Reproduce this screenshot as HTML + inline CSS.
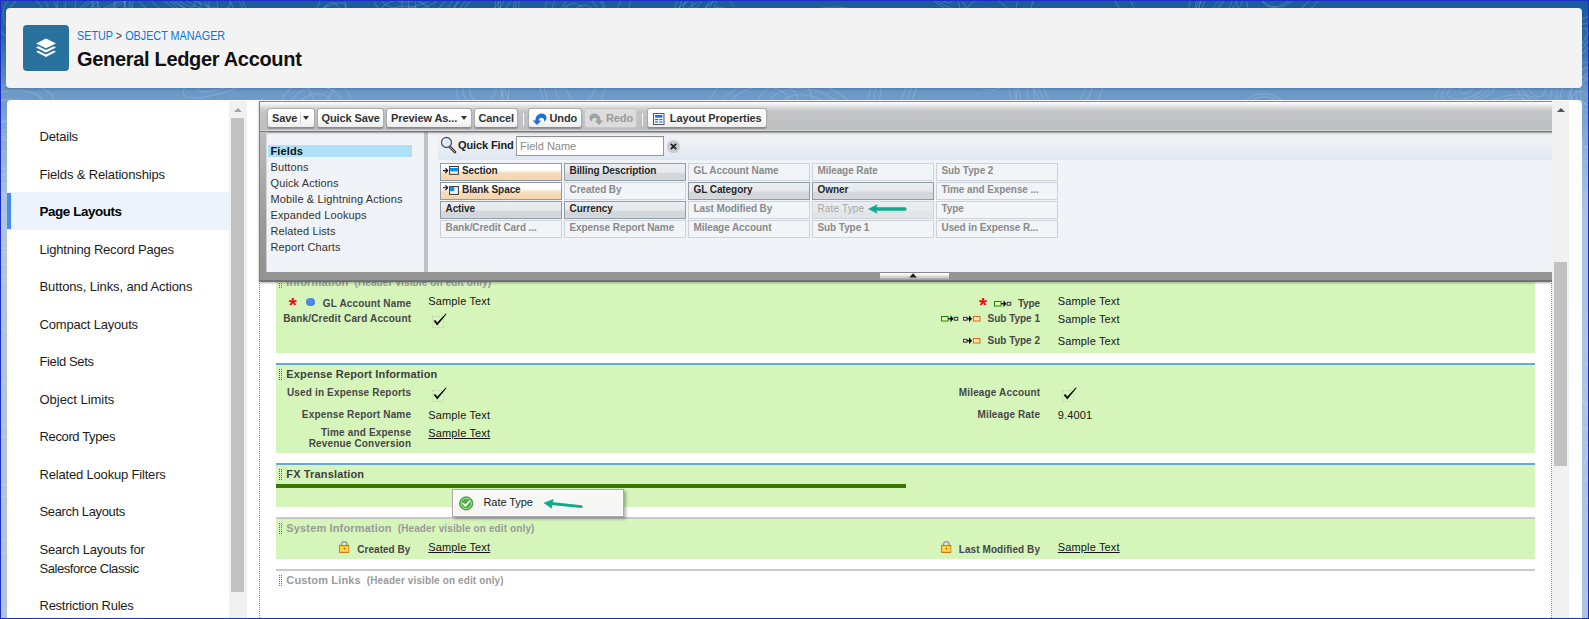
<!DOCTYPE html>
<html lang="en">
<head>
<meta charset="utf-8">
<title>General Ledger Account - Page Layouts</title>
<style>
*{box-sizing:border-box;margin:0;padding:0}
html,body{width:1589px;height:619px;overflow:hidden}
body{position:relative;font-family:"Liberation Sans",Arial,sans-serif;color:#222;
 background:linear-gradient(to bottom,#1b5c9e 0px,#1b5c9e 8px,#2a68a8 36px,#4a80b9 66px,#6a98c8 92px,#7fa5d2 124px,#95b3da 160px,#a9c0e0 196px,#aec3e1 218px,#aec3e1 619px);}
.abs{position:absolute}
.frame{position:absolute;left:0;top:0;width:1589px;height:619px;border:1.4px solid #1a2fc0;border-top-width:1px;z-index:50;pointer-events:none}
/* header card */
.hcard{position:absolute;left:6px;top:8px;width:1576px;height:79.5px;background:#f3f3f3;border-radius:4px;box-shadow:0 2px 2px rgba(0,0,0,.12)}
.hicon{position:absolute;left:17px;top:17px;width:46px;height:46px;background:#2a729e;border-radius:4px}
.crumb{position:absolute;left:71px;top:19.8px;font-size:12px;line-height:16px;color:#0b74d6;white-space:nowrap;transform-origin:left center;transform:scaleX(.9)}
.crumb i{font-style:normal;color:#444}
.title{position:absolute;left:71px;top:38px;font-size:20px;line-height:26px;font-weight:bold;color:#111;white-space:nowrap;letter-spacing:-.32px}
/* main card */
.mcard{position:absolute;left:7px;top:100px;width:1575px;height:530px;background:#fff;border-radius:4px}
/* nav */
.nav{position:absolute;left:7px;top:117px;width:222px}
.nav div{height:37.5px;padding:10px 0 0 32.5px;font-size:13px;line-height:19.5px;color:#1c1c1c;letter-spacing:-.17px;white-space:nowrap}
.nav div.tall{height:56.5px;line-height:19px}
.nav div.on{position:relative;background:#ecf3fd;font-weight:bold;color:#000;font-size:13.4px}
.nav div.on::before{content:"";position:absolute;left:0;top:1px;width:4px;height:35.8px;background:#3f8df3}
.sbtrack{position:absolute;background:#f1f1f1}
.sbthumb{position:absolute;background:#c1c1c1}
.arrowup{position:absolute;width:0;height:0;border-left:4px solid transparent;border-right:4px solid transparent;border-bottom:4.5px solid #a3a3a3}
</style>
</head>
<body>
<!--BGPAT--><svg class="abs" style="left:0;top:0;z-index:0" width="1589" height="619" viewBox="0 0 1589 619" fill="none" stroke="#fff" stroke-width="1" stroke-opacity=".17"><ellipse cx="508" cy="-4" rx="52" ry="12" transform="rotate(96 508 -4)"/><ellipse cx="508" cy="-4" rx="38" ry="9" transform="rotate(96 508 -4)"/><ellipse cx="508" cy="-4" rx="29" ry="7" transform="rotate(96 508 -4)"/><ellipse cx="120" cy="34" rx="31" ry="25" transform="rotate(11 120 34)"/><ellipse cx="120" cy="34" rx="23" ry="19" transform="rotate(11 120 34)"/><ellipse cx="930" cy="-16" rx="48" ry="11" transform="rotate(40 930 -16)"/><ellipse cx="930" cy="-16" rx="38" ry="9" transform="rotate(40 930 -16)"/><ellipse cx="930" cy="-16" rx="28" ry="7" transform="rotate(40 930 -16)"/><ellipse cx="483" cy="89" rx="27" ry="26" transform="rotate(115 483 89)"/><ellipse cx="483" cy="89" rx="20" ry="20" transform="rotate(115 483 89)"/><ellipse cx="483" cy="89" rx="14" ry="13" transform="rotate(115 483 89)"/><ellipse cx="989" cy="44" rx="46" ry="32" transform="rotate(84 989 44)"/><ellipse cx="989" cy="44" rx="36" ry="25" transform="rotate(84 989 44)"/><ellipse cx="989" cy="44" rx="26" ry="18" transform="rotate(84 989 44)"/><ellipse cx="989" cy="44" rx="10" ry="7" transform="rotate(84 989 44)"/><ellipse cx="113" cy="17" rx="44" ry="20" transform="rotate(81 113 17)"/><ellipse cx="113" cy="17" rx="34" ry="15" transform="rotate(81 113 17)"/><ellipse cx="1214" cy="-4" rx="43" ry="11" transform="rotate(120 1214 -4)"/><ellipse cx="1214" cy="-4" rx="34" ry="9" transform="rotate(120 1214 -4)"/><ellipse cx="1214" cy="-4" rx="23" ry="6" transform="rotate(120 1214 -4)"/><ellipse cx="1279" cy="-15" rx="23" ry="18" transform="rotate(125 1279 -15)"/><ellipse cx="1279" cy="-15" rx="17" ry="13" transform="rotate(125 1279 -15)"/><ellipse cx="1035" cy="114" rx="61" ry="18" transform="rotate(69 1035 114)"/><ellipse cx="1035" cy="114" rx="46" ry="14" transform="rotate(69 1035 114)"/><ellipse cx="1035" cy="114" rx="35" ry="10" transform="rotate(69 1035 114)"/><ellipse cx="171" cy="-17" rx="58" ry="14" transform="rotate(45 171 -17)"/><ellipse cx="171" cy="-17" rx="44" ry="10" transform="rotate(45 171 -17)"/><ellipse cx="171" cy="-17" rx="33" ry="8" transform="rotate(45 171 -17)"/><ellipse cx="171" cy="-17" rx="18" ry="4" transform="rotate(45 171 -17)"/><ellipse cx="433" cy="-6" rx="40" ry="25" transform="rotate(127 433 -6)"/><ellipse cx="433" cy="-6" rx="31" ry="20" transform="rotate(127 433 -6)"/><ellipse cx="433" cy="-6" rx="23" ry="14" transform="rotate(127 433 -6)"/><ellipse cx="115" cy="-4" rx="52" ry="10" transform="rotate(150 115 -4)"/><ellipse cx="115" cy="-4" rx="42" ry="8" transform="rotate(150 115 -4)"/><ellipse cx="115" cy="-4" rx="28" ry="6" transform="rotate(150 115 -4)"/><ellipse cx="582" cy="54" rx="68" ry="29" transform="rotate(93 582 54)"/><ellipse cx="582" cy="54" rx="49" ry="21" transform="rotate(93 582 54)"/><ellipse cx="1532" cy="70" rx="47" ry="21" transform="rotate(71 1532 70)"/><ellipse cx="1532" cy="70" rx="37" ry="17" transform="rotate(71 1532 70)"/><ellipse cx="1532" cy="70" rx="28" ry="12" transform="rotate(71 1532 70)"/><ellipse cx="1532" cy="70" rx="16" ry="7" transform="rotate(71 1532 70)"/><ellipse cx="245" cy="23" rx="21" ry="10" transform="rotate(27 245 23)"/><ellipse cx="245" cy="23" rx="16" ry="8" transform="rotate(27 245 23)"/><ellipse cx="95" cy="4" rx="38" ry="28" transform="rotate(172 95 4)"/><ellipse cx="95" cy="4" rx="30" ry="22" transform="rotate(172 95 4)"/><ellipse cx="95" cy="4" rx="20" ry="14" transform="rotate(172 95 4)"/><ellipse cx="1574" cy="42" rx="34" ry="14" transform="rotate(135 1574 42)"/><ellipse cx="1574" cy="42" rx="25" ry="10" transform="rotate(135 1574 42)"/><ellipse cx="1574" cy="42" rx="18" ry="7" transform="rotate(135 1574 42)"/><ellipse cx="315" cy="108" rx="37" ry="29" transform="rotate(165 315 108)"/><ellipse cx="315" cy="108" rx="27" ry="21" transform="rotate(165 315 108)"/><ellipse cx="315" cy="108" rx="18" ry="14" transform="rotate(165 315 108)"/><ellipse cx="406" cy="26" rx="27" ry="32" transform="rotate(96 406 26)"/><ellipse cx="406" cy="26" rx="20" ry="24" transform="rotate(96 406 26)"/><ellipse cx="406" cy="26" rx="13" ry="15" transform="rotate(96 406 26)"/><ellipse cx="1216" cy="2" rx="30" ry="21" transform="rotate(145 1216 2)"/><ellipse cx="1216" cy="2" rx="23" ry="16" transform="rotate(145 1216 2)"/><ellipse cx="1216" cy="2" rx="18" ry="13" transform="rotate(145 1216 2)"/><ellipse cx="26" cy="14" rx="31" ry="29" transform="rotate(172 26 14)"/><ellipse cx="26" cy="14" rx="23" ry="22" transform="rotate(172 26 14)"/><ellipse cx="26" cy="14" rx="17" ry="16" transform="rotate(172 26 14)"/><ellipse cx="26" cy="14" rx="5" ry="5" transform="rotate(172 26 14)"/><ellipse cx="111" cy="-11" rx="42" ry="19" transform="rotate(87 111 -11)"/><ellipse cx="111" cy="-11" rx="32" ry="15" transform="rotate(87 111 -11)"/><ellipse cx="1283" cy="-13" rx="52" ry="35" transform="rotate(141 1283 -13)"/><ellipse cx="1283" cy="-13" rx="41" ry="28" transform="rotate(141 1283 -13)"/><ellipse cx="1283" cy="-13" rx="25" ry="17" transform="rotate(141 1283 -13)"/><ellipse cx="522" cy="87" rx="69" ry="21" transform="rotate(72 522 87)"/><ellipse cx="522" cy="87" rx="54" ry="17" transform="rotate(72 522 87)"/><ellipse cx="187" cy="-4" rx="65" ry="33" transform="rotate(26 187 -4)"/><ellipse cx="187" cy="-4" rx="50" ry="25" transform="rotate(26 187 -4)"/><ellipse cx="187" cy="-4" rx="33" ry="17" transform="rotate(26 187 -4)"/><ellipse cx="187" cy="-4" rx="24" ry="12" transform="rotate(26 187 -4)"/><ellipse cx="3" cy="111" rx="52" ry="25" transform="rotate(168 3 111)"/><ellipse cx="3" cy="111" rx="41" ry="19" transform="rotate(168 3 111)"/><ellipse cx="3" cy="111" rx="24" ry="11" transform="rotate(168 3 111)"/><ellipse cx="3" cy="111" rx="20" ry="10" transform="rotate(168 3 111)"/><ellipse cx="327" cy="45" rx="58" ry="19" transform="rotate(98 327 45)"/><ellipse cx="327" cy="45" rx="43" ry="14" transform="rotate(98 327 45)"/><ellipse cx="327" cy="45" rx="26" ry="9" transform="rotate(98 327 45)"/><ellipse cx="1060" cy="89" rx="45" ry="33" transform="rotate(158 1060 89)"/><ellipse cx="1060" cy="89" rx="34" ry="25" transform="rotate(158 1060 89)"/><ellipse cx="1060" cy="89" rx="27" ry="20" transform="rotate(158 1060 89)"/><ellipse cx="697" cy="1" rx="18" ry="32" transform="rotate(31 697 1)"/><ellipse cx="697" cy="1" rx="14" ry="26" transform="rotate(31 697 1)"/><ellipse cx="697" cy="1" rx="11" ry="19" transform="rotate(31 697 1)"/><ellipse cx="697" cy="1" rx="4" ry="8" transform="rotate(31 697 1)"/><ellipse cx="845" cy="43" rx="58" ry="35" transform="rotate(10 845 43)"/><ellipse cx="845" cy="43" rx="43" ry="26" transform="rotate(10 845 43)"/><ellipse cx="845" cy="43" rx="30" ry="18" transform="rotate(10 845 43)"/><ellipse cx="896" cy="81" rx="65" ry="22" transform="rotate(110 896 81)"/><ellipse cx="896" cy="81" rx="50" ry="17" transform="rotate(110 896 81)"/><ellipse cx="896" cy="81" rx="34" ry="12" transform="rotate(110 896 81)"/><ellipse cx="759" cy="107" rx="54" ry="35" transform="rotate(170 759 107)"/><ellipse cx="759" cy="107" rx="40" ry="25" transform="rotate(170 759 107)"/><ellipse cx="759" cy="107" rx="31" ry="20" transform="rotate(170 759 107)"/><ellipse cx="709" cy="33" rx="38" ry="19" transform="rotate(121 709 33)"/><ellipse cx="709" cy="33" rx="29" ry="14" transform="rotate(121 709 33)"/><ellipse cx="709" cy="33" rx="18" ry="9" transform="rotate(121 709 33)"/><ellipse cx="709" cy="33" rx="7" ry="3" transform="rotate(121 709 33)"/><ellipse cx="232" cy="75" rx="52" ry="14" transform="rotate(159 232 75)"/><ellipse cx="232" cy="75" rx="38" ry="10" transform="rotate(159 232 75)"/><ellipse cx="232" cy="75" rx="28" ry="8" transform="rotate(159 232 75)"/><ellipse cx="232" cy="75" rx="15" ry="4" transform="rotate(159 232 75)"/><ellipse cx="1593" cy="92" rx="26" ry="22" transform="rotate(93 1593 92)"/><ellipse cx="1593" cy="92" rx="20" ry="17" transform="rotate(93 1593 92)"/><ellipse cx="1593" cy="92" rx="15" ry="13" transform="rotate(93 1593 92)"/><ellipse cx="577" cy="22" rx="42" ry="30" transform="rotate(69 577 22)"/><ellipse cx="577" cy="22" rx="33" ry="24" transform="rotate(69 577 22)"/><ellipse cx="577" cy="22" rx="19" ry="13" transform="rotate(69 577 22)"/><ellipse cx="1265" cy="111" rx="23" ry="17" transform="rotate(7 1265 111)"/><ellipse cx="1265" cy="111" rx="19" ry="14" transform="rotate(7 1265 111)"/><ellipse cx="1265" cy="111" rx="12" ry="9" transform="rotate(7 1265 111)"/><ellipse cx="1466" cy="90" rx="31" ry="14" transform="rotate(165 1466 90)"/><ellipse cx="1466" cy="90" rx="25" ry="11" transform="rotate(165 1466 90)"/><ellipse cx="1466" cy="90" rx="19" ry="8" transform="rotate(165 1466 90)"/><ellipse cx="1466" cy="90" rx="7" ry="3" transform="rotate(165 1466 90)"/><ellipse cx="673" cy="-15" rx="67" ry="28" transform="rotate(144 673 -15)"/><ellipse cx="673" cy="-15" rx="52" ry="22" transform="rotate(144 673 -15)"/><ellipse cx="411" cy="-8" rx="19" ry="38" transform="rotate(75 411 -8)"/><ellipse cx="411" cy="-8" rx="15" ry="30" transform="rotate(75 411 -8)"/><ellipse cx="411" cy="-8" rx="9" ry="18" transform="rotate(75 411 -8)"/><ellipse cx="1509" cy="111" rx="32" ry="15" transform="rotate(168 1509 111)"/><ellipse cx="1509" cy="111" rx="25" ry="12" transform="rotate(168 1509 111)"/><ellipse cx="1509" cy="111" rx="17" ry="8" transform="rotate(168 1509 111)"/><ellipse cx="1076" cy="13" rx="60" ry="38" transform="rotate(7 1076 13)"/><ellipse cx="1076" cy="13" rx="45" ry="29" transform="rotate(7 1076 13)"/><ellipse cx="289" cy="41" rx="67" ry="13" transform="rotate(147 289 41)"/><ellipse cx="289" cy="41" rx="50" ry="10" transform="rotate(147 289 41)"/><ellipse cx="289" cy="41" rx="30" ry="6" transform="rotate(147 289 41)"/><ellipse cx="289" cy="41" rx="11" ry="2" transform="rotate(147 289 41)"/><ellipse cx="482" cy="5" rx="30" ry="16" transform="rotate(159 482 5)"/><ellipse cx="482" cy="5" rx="23" ry="12" transform="rotate(159 482 5)"/><ellipse cx="482" cy="5" rx="18" ry="9" transform="rotate(159 482 5)"/><ellipse cx="192" cy="-15" rx="57" ry="17" transform="rotate(29 192 -15)"/><ellipse cx="192" cy="-15" rx="43" ry="13" transform="rotate(29 192 -15)"/><ellipse cx="805" cy="111" rx="49" ry="29" transform="rotate(8 805 111)"/><ellipse cx="805" cy="111" rx="38" ry="22" transform="rotate(8 805 111)"/><ellipse cx="805" cy="111" rx="27" ry="16" transform="rotate(8 805 111)"/><ellipse cx="0" cy="581" rx="30" ry="42"/><ellipse cx="9" cy="581" rx="21" ry="29"/><ellipse cx="2" cy="262" rx="18" ry="20"/><ellipse cx="3" cy="262" rx="13" ry="14"/><ellipse cx="-2" cy="356" rx="16" ry="40"/><ellipse cx="1" cy="356" rx="11" ry="28"/><ellipse cx="-2" cy="154" rx="19" ry="22"/><ellipse cx="1" cy="154" rx="13" ry="15"/><ellipse cx="7" cy="224" rx="23" ry="41"/><ellipse cx="5" cy="224" rx="16" ry="29"/><ellipse cx="1" cy="461" rx="28" ry="36"/><ellipse cx="9" cy="461" rx="19" ry="25"/><ellipse cx="-2" cy="183" rx="25" ry="46"/><ellipse cx="8" cy="183" rx="18" ry="32"/><ellipse cx="1589" cy="547" rx="23" ry="49"/><ellipse cx="1581" cy="547" rx="16" ry="35"/><ellipse cx="1589" cy="367" rx="21" ry="53"/><ellipse cx="1589" cy="367" rx="15" ry="37"/><ellipse cx="1587" cy="396" rx="28" ry="47"/><ellipse cx="1582" cy="396" rx="20" ry="33"/><ellipse cx="1580" cy="125" rx="14" ry="34"/><ellipse cx="1589" cy="125" rx="10" ry="24"/><ellipse cx="1587" cy="384" rx="23" ry="45"/><ellipse cx="1585" cy="384" rx="16" ry="32"/><ellipse cx="1585" cy="112" rx="26" ry="50"/><ellipse cx="1585" cy="112" rx="18" ry="35"/><ellipse cx="1582" cy="433" rx="13" ry="49"/><ellipse cx="1580" cy="433" rx="9" ry="35"/></svg><!--/BGPAT-->
<div class="hcard">
  <div class="hicon">
    <svg width="46" height="46" viewBox="0 0 46 46">
      <polygon points="23,13.6 33,18.4 23,23.3 13,18.4" fill="#fff"/>
      <polygon points="13,22.4 15.3,21.3 23,25 30.7,21.3 33,22.4 23,27.4" fill="#fff"/>
      <polygon points="13,26.8 15.3,25.7 23,29.4 30.7,25.7 33,26.8 23,32" fill="#fff"/>
    </svg>
  </div>
  <div class="crumb">SETUP <i>&gt;</i> OBJECT MANAGER</div>
  <div class="title">General Ledger Account</div>
</div>

<div class="mcard"></div>

<div class="nav">
  <div style="letter-spacing:-0.19px">Details</div>
  <div style="letter-spacing:-0.146px">Fields &amp; Relationships</div>
  <div class="on" style="letter-spacing:-0.41px">Page Layouts</div>
  <div style="letter-spacing:-0.198px">Lightning Record Pages</div>
  <div style="letter-spacing:-0.122px">Buttons, Links, and Actions</div>
  <div style="letter-spacing:-0.184px">Compact Layouts</div>
  <div style="letter-spacing:-0.38px">Field Sets</div>
  <div style="letter-spacing:-0.033px">Object Limits</div>
  <div style="letter-spacing:-0.364px">Record Types</div>
  <div style="letter-spacing:-0.18px">Related Lookup Filters</div>
  <div style="letter-spacing:-0.359px">Search Layouts</div>
  <div class="tall"><span style="letter-spacing:-.228px">Search Layouts for</span><br><span style="letter-spacing:-.44px">Salesforce Classic</span></div>
  <div style="letter-spacing:-0.25px">Restriction Rules</div>
</div>
<div class="sbtrack" style="left:229px;top:101px;width:17.5px;height:520px"></div>
<div class="sbthumb" style="left:231px;top:118px;width:13px;height:474px"></div>
<div class="arrowup" style="left:233.5px;top:108px"></div>

<style>
.ed{position:absolute;left:259px;top:101px;width:1293px;height:181px;background:linear-gradient(#c0c1c3 0,#bcbdbf 30px,#9a9a9a 120px,#939393 170px,#959595 177.5px,#737375 178.5px,#6c6c6e 180px);border-top:1px solid #8a8585;border-left:1px solid #857d7d;z-index:10;box-shadow:0 1px 2.5px rgba(0,0,0,.3)}
.tb{position:absolute;left:0;top:0;width:1292px;height:30px;background:linear-gradient(to bottom,#fff 0,#f2f2f2 2px,#d4d5d6 6px,#c3c4c6 10px,#bfc0c2 24px,#bebfc1 27.6px,#d6d6d6 28.2px,#d6d6d6 28.8px,#77787a 29.2px,#77787a 30px)}
.btn{position:absolute;top:5.9px;height:20.1px;margin-left:-.6px;border:1px solid #adadad;border-bottom-color:#8c8c8c;border-radius:3px;background:linear-gradient(#fff,#fff 40%,#ededed);font-size:11px;font-weight:bold;line-height:18.4px;color:#333;white-space:nowrap;padding-left:3px;letter-spacing:-.1px;box-shadow:0 1px 1px rgba(0,0,0,.25)}
.btn.dis{background:#dcdcdc;color:#9a9a9a;border-color:#c6c6c6;box-shadow:none}
.tsep{position:absolute;top:11px;width:1px;height:13px;background:#f4f4f4}
.dn{position:absolute;width:0;height:0;border-left:3.5px solid transparent;border-right:3.5px solid transparent;border-top:4.5px solid #333}
.pin{position:absolute;left:6.5px;top:29.5px;width:1286.5px;height:140.5px;background:#f0f4f8;box-shadow:-.6px 0 0 #eef2f6}
.pin::after{content:"";position:absolute;left:0;top:0;right:0;height:3px;z-index:4;background:linear-gradient(rgba(0,0,0,.30) 0,rgba(0,0,0,.30) .5px,rgba(0,0,0,.08) 1.5px,rgba(0,0,0,0) 3px)}
.pdiv{position:absolute;left:157.6px;top:0;width:3.8px;height:140.5px;background:#c2c2c6}
.cat{position:absolute;left:4px;font-size:11px;line-height:12px;color:#333;white-space:nowrap;letter-spacing:.12px}
.cat.on{left:1.5px;width:144px;height:12px;background:#aee0f8;font-weight:bold;color:#111;padding-left:2.5px}
.qf{position:absolute;left:171px;top:0;width:1115.5px;height:28px;background:linear-gradient(#eef0f4,#eef0f4 45%,#dde7f2)}
.qfl{position:absolute;left:20.5px;top:7px;font-size:11px;font-weight:bold;color:#222;line-height:13px;white-space:nowrap;letter-spacing:-.12px}
.qfi{position:absolute;left:78px;top:4.5px;width:148px;height:19.5px;border:1px solid #989898;border-top-color:#8c8c8c;background:linear-gradient(#f3f3f3,#fff 4px);font-size:11px;line-height:18.2px;color:#8b8b8b;padding-left:3.5px}
.qfx{position:absolute;left:229.8px;top:8.7px;width:12.6px;height:12.6px;border-radius:6.3px;background:#c9cccf}
.cell{position:absolute;width:122px;height:18px;border:1px solid #909ca6;font-size:10px;font-weight:bold;line-height:12px;padding:1.3px 0 0 4.5px;letter-spacing:-.08px;color:#262626;white-space:nowrap;background:linear-gradient(#eceff2,#e6e9ec 50%,#d2d6da 62%,#d4d8dc)}
.cell.used{color:#8a8a8a;border-color:#cdd3d9;background:#f1f5f8}
.cell.sp{background:linear-gradient(#fff,#fff 35%,#f6dcb9 58%,#f3d3aa);border-color:#8f9ba5;padding-left:21px}
.cell.dragsrc{color:#a6a6a6;font-weight:normal;letter-spacing:.15px;border-color:#cfd4d9;background:linear-gradient(#ebeef1,#e8ebee 50%,#e2e5e8 62%,#e3e6e9)}
.handle{position:absolute;left:619.5px;top:170px;width:69.3px;height:7.9px;background:linear-gradient(#8a8a8a 0,#8a8a8a .7px,#fbfbfb 1.5px,#ececec 40%,#c8c8c8 70%,#a2a2a2 92%,#929292 100%)}
</style>
<div class="ed">
  <div class="tb">
    <div class="btn" style="left:8px;width:47.1px;padding-left:3.6px">Save<span class="abs" style="left:31.1px;top:2.7px;width:1px;height:12px;background:#d5d5d5"></span><span class="dn" style="left:34.8px;top:6.7px"></span></div>
    <div class="btn" style="left:58px;width:66.1px;padding-left:3.1px">Quick Save</div>
    <div class="btn" style="left:127px;width:85.1px;padding-left:3.6px">Preview As...<span class="dn" style="left:73.1px;top:6.7px"></span></div>
    <div class="btn" style="left:215px;width:43.6px;padding-left:3.1px">Cancel</div>
    <div class="tsep" style="left:262.6px"></div>
    <div class="btn" style="left:269px;width:53.1px;padding-left:20.1px">Undo
      <svg class="abs" style="left:2.6px;top:4.2px" width="17" height="12.5" viewBox="0 0 16 12"><path d="M0.5 7.2 L4.6 11.6 L8.6 7.4 L6.2 7.3 C6.3 4.6 9.2 3.6 10.9 5.4 C11.6 6.2 11.7 7.3 11.4 8.4 C14.2 6.9 14.6 3.4 12.2 1.5 C9.2 -0.8 3.4 0.6 3.1 7.2 Z" fill="#1b6fd8"/></svg>
    </div>
    <div class="btn dis" style="left:325px;width:52.1px;padding-left:20.6px">Redo
      <svg class="abs" style="left:1.4px;top:4.2px" width="17" height="12.5" viewBox="0 0 16 12"><path d="M15.5 7.2 L11.4 11.6 L7.4 7.4 L9.8 7.3 C9.7 4.6 6.8 3.6 5.1 5.4 C4.4 6.2 4.3 7.3 4.6 8.4 C1.8 6.9 1.4 3.4 3.8 1.5 C6.8 -0.8 12.6 0.6 12.9 7.2 Z" fill="#a2a2a2"/></svg>
    </div>
    <div class="tsep" style="left:381.6px"></div>
    <div class="btn" style="left:388px;width:119.1px;padding-left:21.4px">Layout Properties
      <svg class="abs" style="left:4.2px;top:4.5px" width="12" height="12" viewBox="0 0 12 12"><rect x=".5" y=".5" width="10.5" height="11" fill="#fff" stroke="#555" stroke-width="1"/><rect x="2" y="2" width="7.5" height="2.6" fill="#1d6be0"/><rect x="2" y="6" width="3.2" height="1.2" fill="#1d6be0"/><rect x="6.3" y="6" width="3.2" height="1.2" fill="#1d6be0"/><rect x="2" y="8.4" width="3.2" height="1.2" fill="#1d6be0"/><rect x="6.3" y="8.4" width="3.2" height="1.2" fill="#1d6be0"/></svg>
    </div>
  </div>
  <div class="pin">
    <div class="cat on" style="top:13.5px">Fields</div>
    <div class="cat" style="top:29.5px">Buttons</div>
    <div class="cat" style="top:45.5px">Quick Actions</div>
    <div class="cat" style="top:61.5px">Mobile &amp; Lightning Actions</div>
    <div class="cat" style="top:77.5px">Expanded Lookups</div>
    <div class="cat" style="top:93.5px">Related Lists</div>
    <div class="cat" style="top:109.5px">Report Charts</div>
    <div class="pdiv"></div>
    <div class="qf">
      <svg class="abs" style="left:2px;top:4px" width="17" height="18" viewBox="0 0 17 18"><line x1="9.5" y1="10.5" x2="15" y2="16" stroke="#3a3a3a" stroke-width="2.6" stroke-linecap="round"/><line x1="10" y1="11" x2="14.6" y2="15.6" stroke="#c9a36a" stroke-width="1" stroke-linecap="round"/><circle cx="6.5" cy="6.5" r="5" fill="#d9ecfa" stroke="#555" stroke-width="1.3"/><path d="M3.2 6.2 A3.4 3.4 0 0 1 6.4 3" stroke="#fff" stroke-width="1.2" fill="none"/></svg>
      <div class="qfl">Quick Find</div>
      <div class="qfi">Field Name</div>
      <div class="qfx"><svg class="abs" style="left:2.8px;top:2.8px" width="7" height="7" viewBox="0 0 7 7"><path d="M.8 .8 L6.2 6.2 M6.2 .8 L.8 6.2" stroke="#222" stroke-width="1.8"/></svg></div>
    </div>
    <div class="cell sp" style="left:173.5px;top:31.5px">Section<svg class="abs" style="left:1.5px;top:2.3px" width="19" height="11" viewBox="0 0 19 11"><path d="M0 4.6 H4.5 M2.4 2.2 L4.7 4.6 L2.4 7" stroke="#111" stroke-width="1.1" fill="none"/><rect x="6.6" y=".5" width="8.8" height="7.8" fill="#fff" stroke="#333"/><rect x="7.1" y="2" width="7.8" height="3.4" fill="#0a8cf5"/></svg></div>
    <div class="cell " style="left:297.5px;top:31.5px">Billing Description</div>
    <div class="cell used" style="left:421.5px;top:31.5px">GL Account Name</div>
    <div class="cell used" style="left:545.5px;top:31.5px">Mileage Rate</div>
    <div class="cell used" style="left:669.5px;top:31.5px">Sub Type 2</div>
    <div class="cell sp" style="left:173.5px;top:50.5px">Blank Space<svg class="abs" style="left:1.5px;top:.8px" width="19" height="13" viewBox="0 0 19 13"><path d="M0 3.8 H4.5 M2.4 1.4 L4.7 3.8 L2.4 6.2" stroke="#111" stroke-width="1.1" fill="none"/><rect x="6.6" y="2.6" width="8.8" height="7.8" fill="#f4f8fc" stroke="#333"/><rect x="7.1" y="3.1" width="4.2" height="4" fill="#0a8cf5"/></svg></div>
    <div class="cell used" style="left:297.5px;top:50.5px">Created By</div>
    <div class="cell " style="left:421.5px;top:50.5px">GL Category</div>
    <div class="cell " style="left:545.5px;top:50.5px">Owner</div>
    <div class="cell used" style="left:669.5px;top:50.5px">Time and Expense ...</div>
    <div class="cell " style="left:173.5px;top:69.5px">Active</div>
    <div class="cell " style="left:297.5px;top:69.5px">Currency</div>
    <div class="cell used" style="left:421.5px;top:69.5px">Last Modified By</div>
    <div class="cell dragsrc" style="left:545.5px;top:69.5px">Rate Type<svg class="abs" style="left:55px;top:2.4px" width="40" height="10" viewBox="0 0 40 10"><path d="M.6 5 L9.2 .7 L8 3.6 L36.8 3.6 A1.5 1.5 0 0 1 36.8 6.6 L8 6.6 L9.2 9.3 Z" fill="#12a98b" stroke="#12a98b" stroke-width=".6" stroke-linejoin="round"/></svg></div>
    <div class="cell used" style="left:669.5px;top:69.5px">Type</div>
    <div class="cell used" style="left:173.5px;top:88.5px">Bank/Credit Card ...</div>
    <div class="cell used" style="left:297.5px;top:88.5px">Expense Report Name</div>
    <div class="cell used" style="left:421.5px;top:88.5px">Mileage Account</div>
    <div class="cell used" style="left:545.5px;top:88.5px">Sub Type 1</div>
    <div class="cell used" style="left:669.5px;top:88.5px">Used in Expense R...</div>
  </div>
  <div class="handle"><svg class="abs" style="left:29.1px;top:1.2px" width="9" height="5" viewBox="0 0 9 5"><polygon points="0.4,4.6 4.1,0.3 7.8,4.6" fill="#1c1c1c"/></svg></div>
</div>

<!--CANVAS-->
<style>
.cv{position:absolute;left:0;top:0;width:1589px;height:619px;z-index:5;overflow:hidden}
.dot{position:absolute;top:281px;width:1px;height:340px;background:repeating-linear-gradient(to bottom,#8a8a8a 0,#8a8a8a 1px,transparent 1px,transparent 2px)}
.sec{position:absolute;left:276px;width:1259px;background:#d5f5bb}
.ln{position:absolute;left:276px;width:1259px;height:2px}
.lb{position:absolute;font-size:10px;font-weight:bold;line-height:12px;color:#474747;white-space:nowrap;text-align:right;letter-spacing:.16px}
.vl{position:absolute;font-size:11px;line-height:13px;color:#151515;white-space:nowrap;letter-spacing:.14px}
.vl.u{text-decoration:underline;text-underline-offset:1px}
.sh{position:absolute;left:286.3px;font-size:11px;font-weight:bold;line-height:13px;color:#404040;white-space:nowrap;letter-spacing:.15px}
.sh.g{color:#9a9a9a}
.sh small{font-size:10px;letter-spacing:.12px;margin-left:6px}
.grip{position:absolute;left:278.6px;width:4px;height:12px;background:
 repeating-linear-gradient(to bottom,#555 0,#555 1px,transparent 1px,transparent 2px) 0 0/1px 100% no-repeat,
 repeating-linear-gradient(to bottom,#fff 0,#fff 1px,transparent 1px,transparent 2px) 1px 0/1px 100% no-repeat,
 repeating-linear-gradient(to bottom,#555 0,#555 1px,transparent 1px,transparent 2px) 2.5px 0/1px 100% no-repeat,
 repeating-linear-gradient(to bottom,#fff 0,#fff 1px,transparent 1px,transparent 2px) 3.5px 0/1px 100% no-repeat}
.grip.g{opacity:.85}
.req{position:absolute;font-size:21px;font-weight:bold;line-height:20px;color:#f20d0d}
.cb{position:absolute;width:12px;height:12px;border:1px dotted #cbc6d2}
.tip{position:absolute;left:452px;top:489px;width:172px;height:27.5px;border:1px solid #a9a9a9;background:linear-gradient(#f9f9f7,#f4f5f2);box-shadow:inset 0 0 0 1px rgba(255,255,255,.7),2px 2px 3px rgba(0,0,0,.3)}
</style>
<div class="cv">
<div class="dot" style="left:259px"></div><div class="dot" style="left:1551px"></div>
<div class="sec" style="top:273px;height:79.8px"></div>
<div class="ln" style="top:363px;background:#6ca8ca"></div><div class="sec" style="top:365px;height:87.8px"></div>
<div class="ln" style="top:463px;background:#6ca8ca"></div><div class="sec" style="top:465px;height:41.7px"></div>
<div class="ln" style="top:517px;background:#c9c9c9"></div><div class="sec" style="top:519px;height:39.7px"></div>
<div class="ln" style="top:569px;background:#c9c9c9"></div>
<div class="grip g" style="top:276.5px"></div><div class="sh g" style="top:275.69px">Information<small>(Header visible on edit only)</small></div>
<div class="req" style="left:288.8px;top:294.9px">*</div>
<div class="abs" style="left:306.2px;top:297.5px;width:8.4px;height:8.4px;border-radius:50%;background:radial-gradient(circle at 40% 35%,#5b93ea,#3f78d6)"></div>
<div class="lb" style="left:211.145px;width:200px;top:297.54px;letter-spacing:0.145px">GL Account Name</div>
<div class="vl" style="left:428.3px;top:294.69px">Sample Text</div>
<div class="lb" style="left:211.163px;width:200px;top:312.54px;letter-spacing:0.163px">Bank/Credit Card Account</div>
<div class="cb" style="left:432px;top:316px"></div><svg class="abs" style="left:432.8px;top:313.4px" width="15" height="14" viewBox="0 0 15 14"><path d="M0.7 8.1 L2.2 6.9 L4.3 9.6 L12.9 0.5 L13.6 1.1 L4.2 12.6 Z" fill="#000"/></svg>
<div class="req" style="left:979.1px;top:294.9px">*</div>
<svg class="abs" style="left:993.5px;top:299.5px" width="18" height="8" viewBox="0 0 18 8"><rect x=".5" y="1.5" width="6.5" height="4.5" fill="#f3f5a2" stroke="#0b8a10"/><path d="M7 3.75 H10" stroke="#000" stroke-width="1.2"/><path d="M9.5 .3 L12.4 3.75 L9.5 7.2 Z" fill="#000"/><rect x="13.2" y="2.3" width="3.6" height="2.9" fill="#e8e8e8" stroke="#222" stroke-width=".9"/></svg>
<div class="lb" style="left:839.826px;width:200px;top:297.54px;letter-spacing:-0.174px">Type</div>
<div class="vl" style="left:1057.8px;top:294.69px">Sample Text</div>
<svg class="abs" style="left:940.5px;top:314.5px" width="18" height="8" viewBox="0 0 18 8"><rect x=".5" y="1.5" width="6.5" height="4.5" fill="#f3f5a2" stroke="#0b8a10"/><path d="M7 3.75 H10" stroke="#000" stroke-width="1.2"/><path d="M9.5 .3 L12.4 3.75 L9.5 7.2 Z" fill="#000"/><rect x="13.2" y="2.3" width="3.6" height="2.9" fill="#e8e8e8" stroke="#222" stroke-width=".9"/></svg>
<svg class="abs" style="left:962.5px;top:314.5px" width="18" height="8" viewBox="0 0 18 8"><rect x=".6" y="2.3" width="3.4" height="2.9" fill="#e8e8e8" stroke="#222" stroke-width=".9"/><path d="M4 3.75 H7" stroke="#000" stroke-width="1.2"/><path d="M6 .3 L9 3.75 L6 7.2 Z" fill="#000"/><rect x="10.4" y="1.5" width="6.5" height="4.5" fill="#f8f2a0" stroke="#e2601c"/></svg>
<div class="lb" style="left:839.98px;width:200px;top:312.54px;letter-spacing:-0.02px">Sub Type 1</div>
<div class="vl" style="left:1057.8px;top:312.69px">Sample Text</div>
<svg class="abs" style="left:962.5px;top:336.5px" width="18" height="8" viewBox="0 0 18 8"><rect x=".6" y="2.3" width="3.4" height="2.9" fill="#e8e8e8" stroke="#222" stroke-width=".9"/><path d="M4 3.75 H7" stroke="#000" stroke-width="1.2"/><path d="M6 .3 L9 3.75 L6 7.2 Z" fill="#000"/><rect x="10.4" y="1.5" width="6.5" height="4.5" fill="#f8f2a0" stroke="#e2601c"/></svg>
<div class="lb" style="left:839.98px;width:200px;top:334.54px;letter-spacing:-0.02px">Sub Type 2</div>
<div class="vl" style="left:1057.8px;top:334.69px">Sample Text</div>
<div class="grip" style="top:368.5px"></div><div class="sh" style="top:367.69px">Expense Report Information</div>
<div class="lb" style="left:211.157px;width:200px;top:386.54px;letter-spacing:0.157px">Used in Expense Reports</div>
<div class="cb" style="left:432px;top:390px"></div><svg class="abs" style="left:432.8px;top:387.4px" width="15" height="14" viewBox="0 0 15 14"><path d="M0.7 8.1 L2.2 6.9 L4.3 9.6 L12.9 0.5 L13.6 1.1 L4.2 12.6 Z" fill="#000"/></svg>
<div class="lb" style="left:840.148px;width:200px;top:386.54px;letter-spacing:0.148px">Mileage Account</div>
<div class="cb" style="left:1062px;top:390px"></div><svg class="abs" style="left:1062.8px;top:387.4px" width="15" height="14" viewBox="0 0 15 14"><path d="M0.7 8.1 L2.2 6.9 L4.3 9.6 L12.9 0.5 L13.6 1.1 L4.2 12.6 Z" fill="#000"/></svg>
<div class="lb" style="left:211.166px;width:200px;top:408.54px;letter-spacing:0.166px">Expense Report Name</div>
<div class="vl" style="left:428.3px;top:408.69px">Sample Text</div>
<div class="lb" style="left:840.114px;width:200px;top:408.54px;letter-spacing:0.114px">Mileage Rate</div>
<div class="vl" style="left:1057.8px;top:408.69px">9.4001</div>
<div class="lb" style="left:211.161px;width:200px;top:426.54px;letter-spacing:0.161px">Time and Expense</div>
<div class="lb" style="left:211.169px;width:200px;top:437.54px;letter-spacing:0.169px">Revenue Conversion</div>
<div class="vl u" style="left:428.3px;top:426.69px">Sample Text</div>
<div class="grip" style="top:468.5px"></div><div class="sh" style="top:467.69px">FX Translation</div>
<div class="abs" style="left:276px;top:484px;width:630px;height:4px;background:#367800"></div>
<div class="tip">
<svg class="abs" style="left:6px;top:6px" width="15" height="15" viewBox="0 0 15 15"><circle cx="7.2" cy="7.4" r="6.6" fill="#4cae3c" stroke="#2f8c29" stroke-width=".8"/><circle cx="7.2" cy="7.4" r="5.2" fill="none" stroke="#bfe6b5" stroke-width=".9"/><path d="M4.2 7.6 L6.4 9.8 L10.3 5.4" fill="none" stroke="#fff" stroke-width="1.8" stroke-linecap="round" stroke-linejoin="round"/></svg>
<div class="vl" style="left:30.5px;top:5.689999999999998px;color:#222;letter-spacing:-.07px">Rate Type</div>
<svg class="abs" style="left:90px;top:8.5px" width="42" height="11" viewBox="0 0 42 11"><path d="M1.2 4 L10.2 .5 L9.2 4.4 L8.6 9.2 Z" fill="#12a98b" stroke="#12a98b" stroke-width=".7" stroke-linejoin="round"/><line x1="8.5" y1="4.5" x2="38.2" y2="7.6" stroke="#12a98b" stroke-width="2.9" stroke-linecap="round"/></svg>
</div>
<div class="grip g" style="top:522.5px"></div><div class="sh g" style="top:521.69px">System Information<small>(Header visible on edit only)</small></div>
<svg class="abs" style="left:339.4px;top:541px" width="11" height="12" viewBox="0 0 11 12"><path d="M2.3 5 V3.6 A2.9 2.9 0 0 1 8.1 3.6 V5" fill="none" stroke="#a3a1b8" stroke-width="1.8"/><rect x=".6" y="4.4" width="9.2" height="7.1" fill="#fbc81a" stroke="#c8700f" stroke-width=".9"/><rect x="1.2" y="6.2" width="8.4" height="1" fill="#ffe98a"/><rect x="1.2" y="8.6" width="8.4" height="1" fill="#ffe98a"/><rect x="4.9" y="6.6" width="1.2" height="2" fill="#b06a10"/></svg>
<div class="lb" style="left:210.43999999999997px;width:200px;top:543.53px;letter-spacing:0.04px">Created By</div>
<div class="vl u" style="left:428.3px;top:540.69px">Sample Text</div>
<svg class="abs" style="left:940.5px;top:541px" width="11" height="12" viewBox="0 0 11 12"><path d="M2.3 5 V3.6 A2.9 2.9 0 0 1 8.1 3.6 V5" fill="none" stroke="#a3a1b8" stroke-width="1.8"/><rect x=".6" y="4.4" width="9.2" height="7.1" fill="#fbc81a" stroke="#c8700f" stroke-width=".9"/><rect x="1.2" y="6.2" width="8.4" height="1" fill="#ffe98a"/><rect x="1.2" y="8.6" width="8.4" height="1" fill="#ffe98a"/><rect x="4.9" y="6.6" width="1.2" height="2" fill="#b06a10"/></svg>
<div class="lb" style="left:840.081px;width:200px;top:543.53px;letter-spacing:0.081px">Last Modified By</div>
<div class="vl u" style="left:1057.8px;top:540.69px">Sample Text</div>
<div class="grip g" style="top:574.8px"></div><div class="sh g" style="top:573.99px">Custom Links<small>(Header visible on edit only)</small></div>
</div>
<div class="sbtrack" style="left:1552px;top:101px;width:17px;height:520px;z-index:12"></div>
<div class="sbthumb" style="left:1554px;top:262px;width:13px;height:204px;z-index:13"></div>
<div class="arrowup" style="left:1556.5px;top:108px;border-bottom-color:#505050;z-index:13"></div>
<!--CANVASEND-->

<div class="frame"></div>
</body>
</html>
